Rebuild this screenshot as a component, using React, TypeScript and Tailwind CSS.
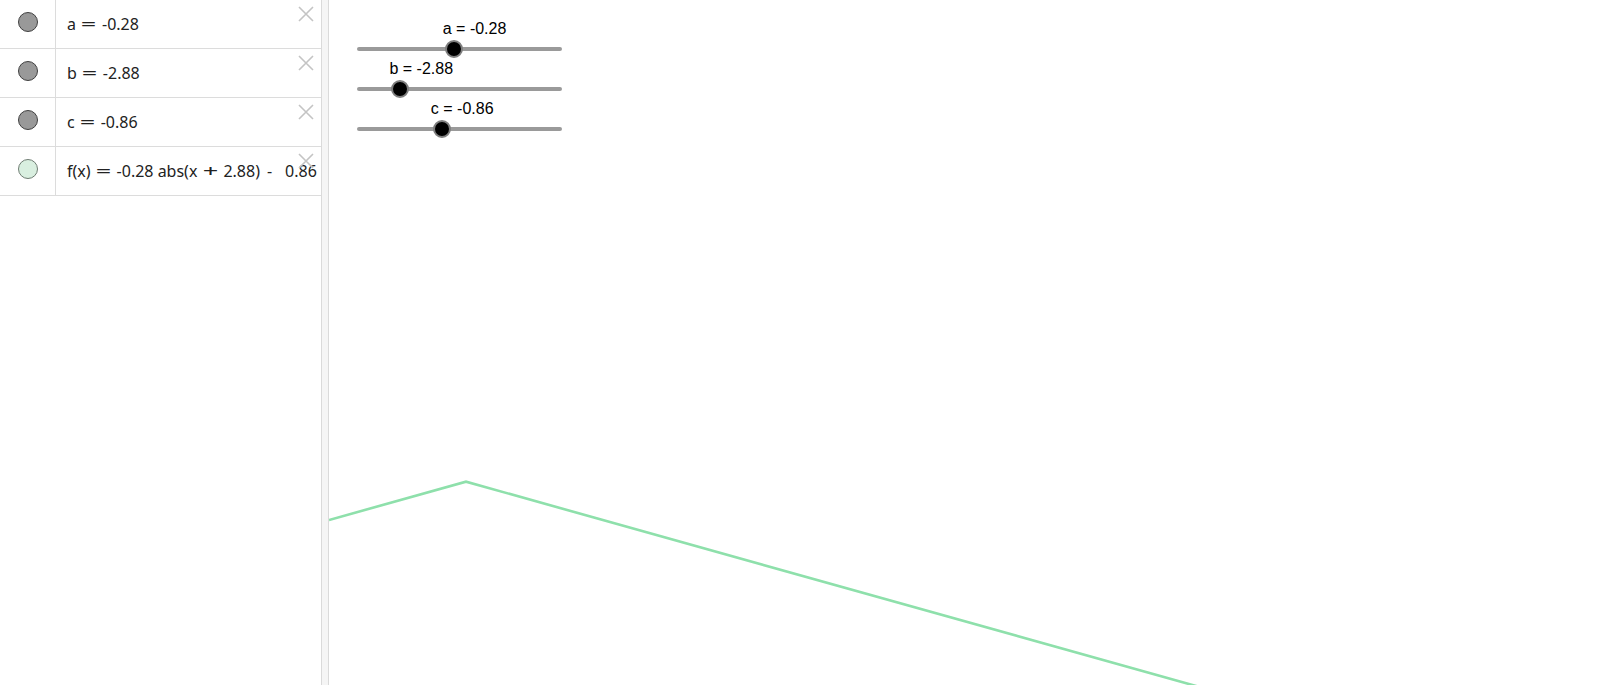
import React from 'react';

interface Item {
  parts: string[];
  fill: string;
  border: string;
}

// parts alternate: text, operator, text, operator...
const items: Item[] = [
  { parts: ['a', '=', '-0.28'], fill: 'bg-[#999999]', border: 'border-[#404040]' },
  { parts: ['b', '=', '-2.88'], fill: 'bg-[#999999]', border: 'border-[#404040]' },
  { parts: ['c', '=', '-0.86'], fill: 'bg-[#999999]', border: 'border-[#404040]' },
  {
    parts: ['f(x)', '=', '-0.28 abs(x', '+', '2.88)'],
    fill: 'bg-[#d9efe0]',
    border: 'border-[#6f7d73]',
  },
];

interface Slider {
  label: string;
  value: number;
}

const sliders: Slider[] = [
  { label: 'a = -0.28', value: -0.28 },
  { label: 'b = -2.88', value: -2.88 },
  { label: 'c = -0.86', value: -0.86 },
];

const CloseIcon = () => (
  <svg width="16" height="16" viewBox="0 0 16 16" className="absolute right-[7px] top-[6px]">
    <path d="M1 1 L15 15 M15 1 L1 15" stroke="#c4c4c4" strokeWidth="1.6" fill="none" />
  </svg>
);

const Op: React.FC<{ sym: string }> = ({ sym }) => (
  <span className="inline-block w-[26px] text-center">
    <span className="inline-block scale-x-[1.7]">{sym}</span>
  </span>
);

const AlgebraRow: React.FC<{ item: Item; last?: boolean }> = ({ item, last }) => (
  <div className="relative flex h-[49px] border-b border-[#dcdcdc]">
    <div className="flex w-[56px] shrink-0 justify-center border-r border-[#dcdcdc] pt-[12px] pl-[1px]">
      <div className={`h-[20px] w-[20px] rounded-full border ${item.fill} ${item.border}`} />
    </div>
    <div
      className="flex-1 overflow-hidden whitespace-pre pl-[11px] pt-[16px] text-[16px] leading-[16px] text-[#222]"
      style={{ fontFamily: '"Noto Sans", sans-serif' }}
    >
      {item.parts.map((p, i) => (i % 2 === 1 ? <Op key={i} sym={p} /> : <span key={i}>{p}</span>))}
      {last && (
        <>
          <span className="ml-[7px]">-</span>
          <span className="ml-[13px]">0.86</span>
        </>
      )}
    </div>
    <CloseIcon />
  </div>
);

const SliderWidget: React.FC<{ s: Slider }> = ({ s }) => {
  // range -5..5 across 205px
  const knob = ((s.value + 5) / 10) * 205;
  return (
    <div className="relative h-[40px] w-[205px]">
      <div
        className="absolute top-[-5px] whitespace-nowrap text-[16px] leading-none text-black"
        style={{ left: knob - 11, fontFamily: '"Liberation Sans", Arial, sans-serif' }}
      >
        {s.label}
      </div>
      <div className="absolute left-0 right-0 top-[21px] h-[4px] rounded-full bg-[#9a9a9a]" />
      <div
        className="absolute top-[14px] h-[18px] w-[18px] rounded-full border-[2px] border-[#7f7f7f] bg-black"
        style={{ left: knob - 9 }}
      />
    </div>
  );
};

const App: React.FC = () => {
  return (
    <div className="flex h-[685px] w-[1607px] overflow-hidden bg-white">
      {/* Algebra view */}
      <div className="w-[321px] shrink-0">
        {items.map((item, i) => (
          <AlgebraRow key={i} item={item} last={i === items.length - 1} />
        ))}
      </div>

      {/* Splitter */}
      <div className="w-[8px] shrink-0 border-x border-[#dadada] bg-[#f5f5f5]" />

      {/* Graphics view */}
      <div className="relative flex-1 overflow-hidden">
        <div className="relative z-10 flex flex-col pl-[28px] pt-[26px]">
          {sliders.map((s) => (
            <SliderWidget key={s.label} s={s} />
          ))}
        </div>
        <svg className="absolute left-0 top-0" width="1278" height="685">
          <polyline
            points="0,520 137,481.7 1278,801"
            fill="none"
            stroke="#8ee0ab"
            strokeWidth="2.6"
          />
        </svg>
      </div>
    </div>
  );
};

export default App;
